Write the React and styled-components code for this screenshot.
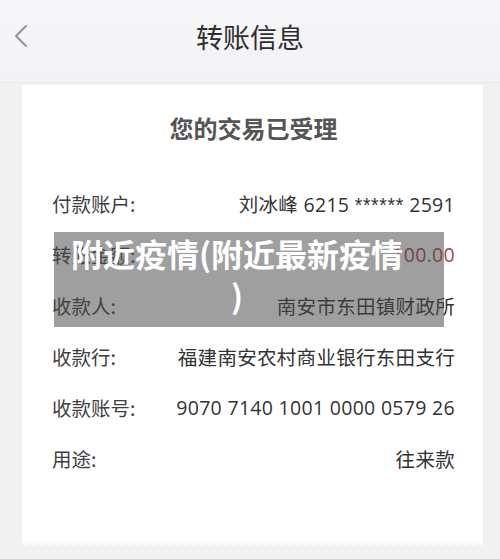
import React from "react";
import styled, { createGlobalStyle } from "styled-components";

const GlobalStyle = createGlobalStyle`
  html, body {
    margin: 0;
    padding: 0;
    background: #f1f1f2;
    font-family: "Noto Sans CJK SC", "Noto Sans", "Liberation Sans", sans-serif;
  }
`;

const Mask = styled.span`
  font-family: "Liberation Sans", sans-serif;
  letter-spacing: 0.6px;
`;

const rows = [
  {
    label: "付款账户:",
    value: (
      <>
        刘冰峰 6215 <Mask>******</Mask> 2591
      </>
    ),
  },
  { label: "转账金额:", value: "100.00", amount: true },
  { label: "收款人:", value: "南安市东田镇财政所" },
  { label: "收款行:", value: "福建南安农村商业银行东田支行" },
  { label: "收款账号:", value: "9070 7140 1001 0000 0579 26" },
  { label: "用途:", value: "往来款" },
];

const App = () => {
  return (
    <Page>
      <GlobalStyle />
      <Header>
        <BackButton aria-label="返回">
          <svg width="16" height="24" viewBox="0 0 16 24" fill="none">
            <path
              d="M13 2 L3 12 L13 22"
              stroke="#909094"
              strokeWidth="1.8"
              strokeLinecap="round"
              strokeLinejoin="round"
            />
          </svg>
        </BackButton>
        <Title>转账信息</Title>
      </Header>

      <Body>
        <Card>
          <CardTitle>您的交易已受理</CardTitle>
          <List>
            {rows.map((row) => (
              <Row key={row.label}>
                <Label>{row.label}</Label>
                <Value $amount={row.amount}>{row.value}</Value>
              </Row>
            ))}
          </List>
          <Watermark>
            附近疫情(附近最新疫情
            <br />)
          </Watermark>
        </Card>
      </Body>
    </Page>
  );
};

export default App;

const Page = styled.div`
  width: 500px;
  height: 559px;
  overflow: hidden;
  background: #f1f1f2;
`;

const Header = styled.div`
  position: relative;
  height: 82px;
  display: flex;
  align-items: flex-start;
  justify-content: center;
  background: linear-gradient(#f6f6f8, #f3f2f7);
  border-bottom: 1px solid #e6e5ec;
`;

const BackButton = styled.div`
  position: absolute;
  left: 13px;
  top: 24px;
  width: 16px;
  height: 24px;
`;

const Title = styled.h1`
  margin: 18px 0 0;
  font-size: 27px;
  line-height: 38px;
  font-weight: 400;
  color: #2e2e2e;
`;

const Body = styled.div`
  padding: 2px 17px 0 22px;
`;

const Card = styled.div`
  position: relative;
  background: #ffffff;
  padding: 27px 28px 58px 30px;

  &::after {
    content: "";
    position: absolute;
    left: 0;
    right: 0;
    bottom: -7px;
    height: 7px;
    background: radial-gradient(circle at 4px 0, #fafafa 3px, transparent 4px) 0 0 / 8px 7px repeat-x;
  }
`;

const CardTitle = styled.h2`
  margin: 0 0 34px;
  text-align: center;
  font-size: 24px;
  line-height: 32px;
  font-weight: 700;
  color: #555555;
`;

const List = styled.div`
  display: flex;
  flex-direction: column;
`;

const Row = styled.div`
  display: flex;
  justify-content: space-between;
  align-items: center;
  height: 51px;
  font-size: 19.5px;
`;

const Label = styled.span`
  color: #3f3f3f;
`;

const Value = styled.span`
  font-size: 19.5px;
  letter-spacing: 0.3px;
  color: ${(p) => (p.$amount ? "#a8464b" : "#333333")};
  font-family: "Open Sans", "Noto Sans CJK SC", sans-serif;
`;

const Watermark = styled.div`
  position: absolute;
  left: 32px;
  top: 147px;
  width: 390px;
  height: 95px;
  box-sizing: border-box;
  padding: 0 24px 0 0;
  background: rgba(70, 70, 70, 0.52);
  color: #ffffff;
  font-size: 32px;
  line-height: 42px;
  font-weight: 700;
  text-align: center;
  white-space: nowrap;
`;
